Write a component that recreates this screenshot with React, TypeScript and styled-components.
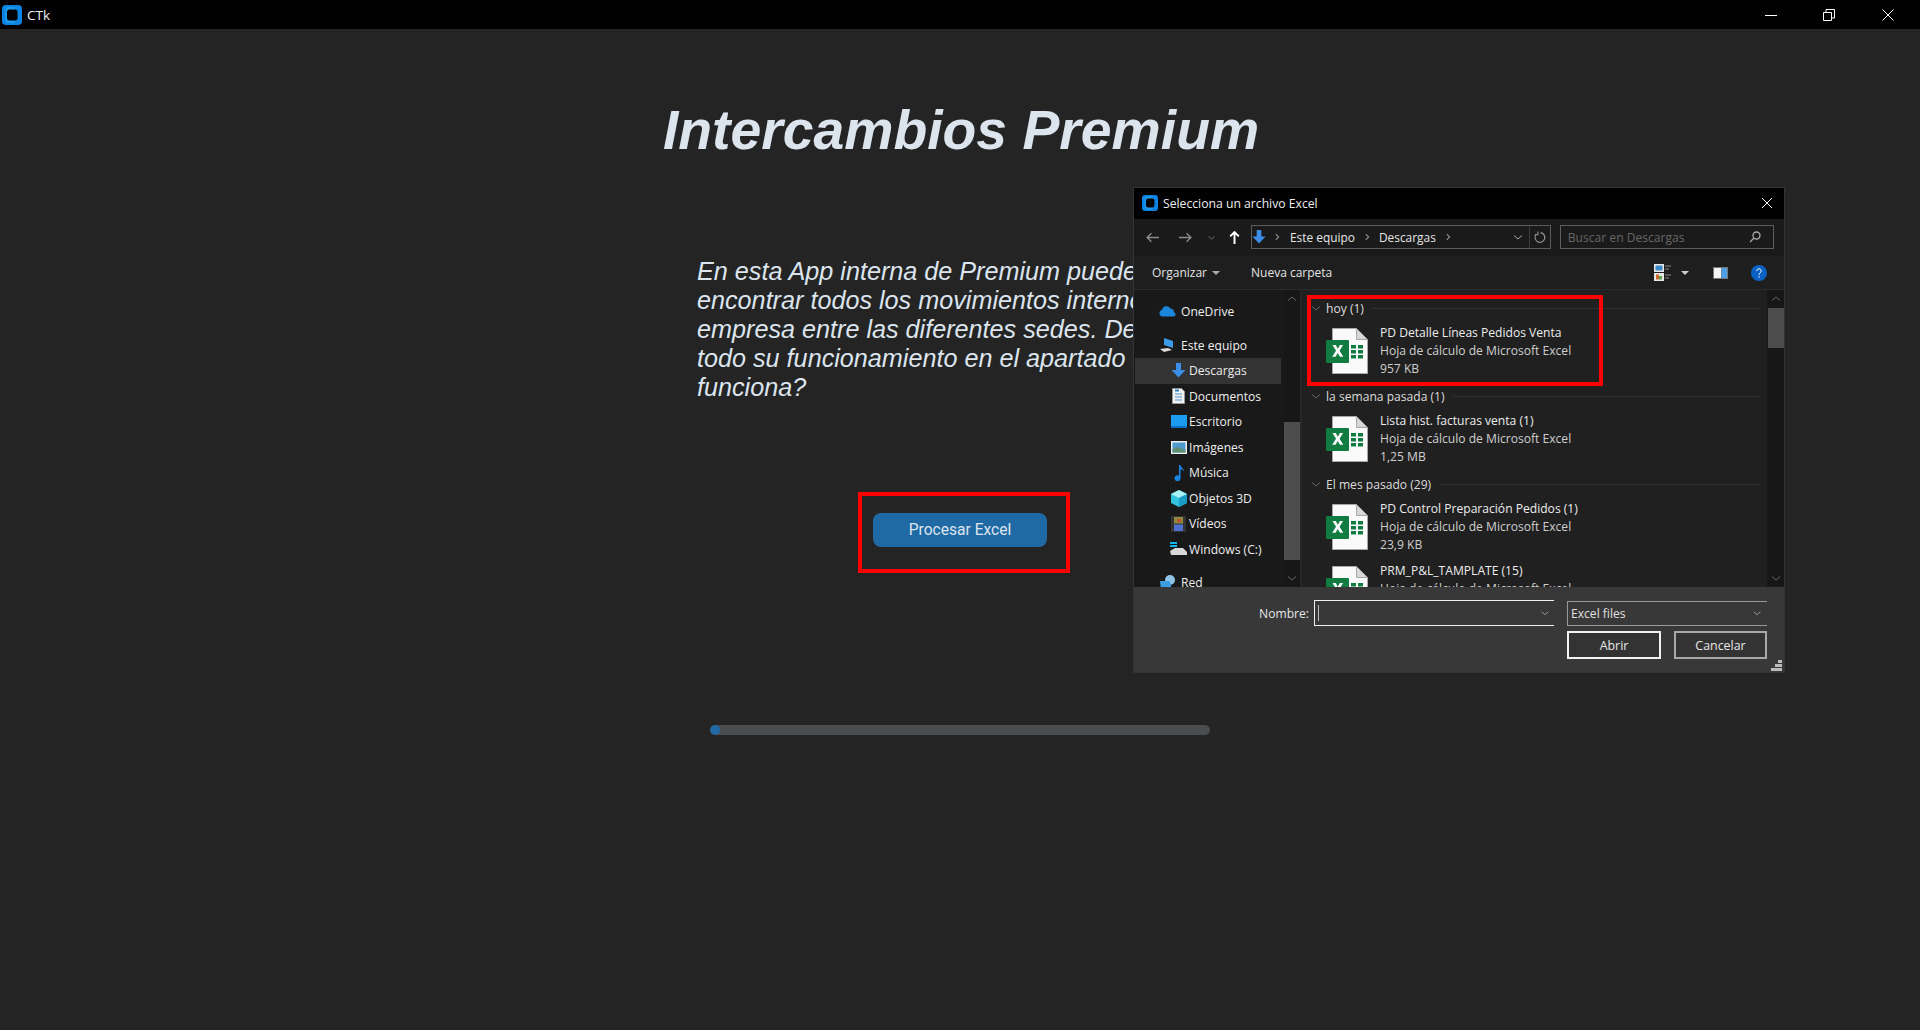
import React from "react";
import styled, { createGlobalStyle } from "styled-components";

const Global = createGlobalStyle`
  html, body { margin: 0; padding: 0; background: #242424; }
  body { font-family: "Liberation Sans", Arial, sans-serif; overflow: hidden; }
  * { box-sizing: border-box; }
`;

const Page = styled.div`
  position: relative;
  width: 1920px;
  height: 1030px;
  background: #242424;
  display: flex;
  flex-direction: column;
  overflow: hidden;
`;

const TitleBar = styled.header`
  height: 29px;
  flex: none;
  background: #000;
  display: flex;
  align-items: center;
  padding-left: 2px;
  color: #f2f2f2;
  font-family: "Open Sans", sans-serif;
  font-size: 13.5px;
`;
const AppName = styled.span`
  margin-left: 5px;
`;
const WindowButtons = styled.div`
  margin-left: auto;
  padding-right: 3px;
  display: flex;
`;
const WindowButton = styled.div`
  width: 58.5px;
  height: 29px;
  display: flex;
  align-items: center;
  justify-content: center;
`;

const Content = styled.main`
  flex: 1;
  display: flex;
  flex-direction: column;
  align-items: center;
`;
const Heading = styled.h1`
  margin: 69px 0 0 2px;
  font-size: 55.3px;
  line-height: 64px;
  font-weight: 700;
  font-style: italic;
  color: #dce4ee;
`;
const Column = styled.div`
  width: 500px;
  display: flex;
  flex-direction: column;
  align-items: center;
`;
const Intro = styled.p`
  align-self: flex-start;
  margin: 95px 0 0 -13px;
  font-size: 25.2px;
  line-height: 29px;
  font-style: italic;
  color: #dce4ee;
  white-space: nowrap;
`;
const RedFrame = styled.div`
  margin-top: 90px;
  margin-left: 8px;
  width: 212px;
  height: 81px;
  border: 4px solid #ff0000;
  display: flex;
  align-items: center;
  padding: 0 0 5px 11px;
`;
const PrimaryButton = styled.button`
  width: 174px;
  height: 34px;
  border: 0;
  border-radius: 8px;
  background: #1f6aa5;
  color: #dce4ee;
  font-family: Roboto, sans-serif;
  font-size: 15.6px;
  padding: 0;
`;
const Progress = styled.div`
  margin-top: 152px;
  width: 500px;
  height: 10px;
  border-radius: 5px;
  background: #4a4d50;
  overflow: hidden;
`;
const ProgressFill = styled.div`
  width: 10px;
  height: 10px;
  border-radius: 5px;
  background: #1f6aa5;
`;

/* Dialog pasted over the page */
const Dialog = styled.section`
  position: absolute;
  left: 1133px;
  top: 187px;
  width: 652px;
  height: 486px;
  border: 1px solid #333;
  display: flex;
  flex-direction: column;
  font-family: "Open Sans", sans-serif;
  font-size: 12.1px;
  color: #eee;
  overflow: hidden;
`;
const DialogTitle = styled.div`
  height: 31px;
  padding: 0 11px 1px 8px;
  flex: none;
  background: #000;
  display: flex;
  align-items: center;
  gap: 5px;
  font-size: 12.2px;
`;
const CloseSlot = styled.div`
  margin-left: auto;
  display: flex;
`;
const NavBar = styled.div`
  height: 37px;
  flex: none;
  background: #1a1a1a;
  display: flex;
  align-items: center;
  padding: 0 10px 1px 0;
`;
const NavIcon = styled.div<{ $w: number }>`
  width: ${(p) => p.$w}px;
  height: 24px;
  flex: none;
  display: flex;
  align-items: center;
  justify-content: center;
`;
const AddressBox = styled.div`
  margin-left: 5px;
  width: 301px;
  height: 24px;
  border: 1px solid #5c5c5c;
  display: flex;
  align-items: center;
  font-size: 11.9px;
`;
const Crumb = styled.span`
  color: #e6e6e6;
  padding: 0 2px;
`;
const Sep = styled.span<{ $w?: number }>`
  width: ${(p) => p.$w ?? 20}px;
  flex: none;
  display: flex;
  justify-content: center;
`;
const AddressEnd = styled.div`
  margin-left: auto;
  display: flex;
  align-items: center;
  height: 22px;
`;
const Refresh = styled.div`
  width: 21px;
  height: 22px;
  border-left: 1px solid #3c3c3c;
  display: flex;
  align-items: center;
  justify-content: center;
`;
const SearchBox = styled.div`
  margin-left: 9px;
  width: 215px;
  height: 24px;
  border: 1px solid #5c5c5c;
  display: flex;
  align-items: center;
  justify-content: space-between;
  padding: 0 12px 0 7px;
  color: #676767;
`;
const Toolbar = styled.div`
  height: 34px;
  flex: none;
  background: #1e1e1e;
  border-bottom: 1px solid #2b2b2b;
  display: flex;
  align-items: center;
  padding: 0 17px 0 18px;
  font-size: 12px;
  color: #e4e4e4;
`;
const ToolLabel = styled.span<{ $left?: number }>`
  margin-left: ${(p) => p.$left ?? 0}px;
`;
const ToolRight = styled.div`
  margin-left: auto;
  display: flex;
  align-items: center;
`;
const Body = styled.div`
  flex: 1;
  display: flex;
  min-height: 0;
  background: #1b1b1b;
`;
const Sidebar = styled.nav`
  width: 149px;
  flex: none;
  background: #191919;
  padding: 8.5px 0 0 1px;
  overflow: hidden;
`;
const NavRow = styled.div<{ $indent: number; $active?: boolean; $gap?: number }>`
  height: 25.5px;
  margin-top: ${(p) => p.$gap ?? 0}px;
  width: 146px;
  display: flex;
  align-items: center;
  gap: ${(p) => (p.$indent < 30 ? 5 : 2)}px;
  padding-left: ${(p) => p.$indent}px;
  background: ${(p) => (p.$active ? "#333" : "transparent")};
  white-space: nowrap;
`;
const RowIcon = styled.span`
  width: 17px;
  height: 17px;
  flex: none;
  display: flex;
  align-items: center;
  justify-content: center;
`;
const ScrollTrack = styled.div`
  width: 17px;
  flex: none;
  background: #171717;
  display: flex;
  flex-direction: column;
  align-items: center;
`;
const ScrollArrow = styled.span<{ $up?: boolean }>`
  height: 18px;
  display: flex;
  align-items: center;
  flex: none;
  transform: ${(p) => (p.$up ? "scaleY(-1)" : "none")};
`;
const ScrollThumb = styled.span<{ $top: number; $height: number }>`
  width: 16px;
  height: ${(p) => p.$height}px;
  margin-top: ${(p) => p.$top}px;
  background: #4d4d4d;
  flex: none;
`;
const Spacer = styled.span`
  flex: 1;
`;
const PaneDivider = styled.div`
  width: 2px;
  flex: none;
  background: #262626;
`;
const FileList = styled.div`
  flex: 1;
  background: #202020;
  padding-top: 8px;
  overflow: hidden;
  min-width: 0;
`;
const GroupHeader = styled.div`
  height: 20px;
  margin-bottom: 2px;
  display: flex;
  align-items: center;
  padding: 0 7px 0 8px;
  color: #dcdcdc;
`;
const GroupName = styled.span`
  margin-left: 4px;
`;
const GroupLine = styled.span`
  flex: 1;
  height: 1px;
  margin-left: 8px;
  background: #303030;
`;
const Group = styled.div`
  margin-bottom: 4px;
`;
const FileRow = styled.div`
  height: 62px;
  display: flex;
  align-items: center;
  padding-left: 24px;
`;
const FileText = styled.div`
  margin-left: 12px;
  display: flex;
  flex-direction: column;
`;
const FileLine = styled.span<{ $strong?: boolean }>`
  height: 18px;
  line-height: 18px;
  white-space: nowrap;
  color: ${(p) => (p.$strong ? "#ededed" : "#cfcfcf")};
`;
const Footer = styled.div`
  height: 85px;
  flex: none;
  background: #383838;
  padding: 13px 17px 0 0;
  display: flex;
  flex-direction: column;
  gap: 5px;
  position: relative;
`;
const FooterRow = styled.div`
  display: flex;
  justify-content: flex-end;
  align-items: center;
`;
const FieldLabel = styled.span`
  margin-right: 5px;
  color: #e6e6e6;
`;
const NameField = styled.div`
  width: 240px;
  height: 26px;
  margin-right: 13px;
  border: 1px solid #f0f0f0;
  border-right: 0;
  display: flex;
  align-items: center;
  justify-content: space-between;
  padding: 0 4px 0 3px;
`;
const Caret = styled.span`
  width: 1px;
  height: 16px;
  background: #bbb;
`;
const TypeField = styled.div`
  width: 200px;
  height: 25px;
  border: 1px solid #999;
  border-right: 0;
  display: flex;
  align-items: center;
  justify-content: space-between;
  padding: 0 5px 0 3px;
  color: #e0e0e0;
`;
const DialogButton = styled.button<{ $main?: boolean }>`
  width: ${(p) => (p.$main ? 94 : 93)}px;
  height: 28px;
  margin-left: ${(p) => (p.$main ? 0 : 13)}px;
  padding: 0;
  background: #333;
  border: 2px solid ${(p) => (p.$main ? "#f2f2f2" : "#a8a8a8")};
  color: #e8e8e8;
  font-family: "Open Sans", sans-serif;
  font-size: 12.4px;
`;
const Grip = styled.div`
  position: absolute;
  right: 2px;
  bottom: 1px;
  display: flex;
`;
const Annotation = styled.div`
  position: absolute;
  left: 1307px;
  top: 295px;
  width: 296px;
  height: 91px;
  border: 4px solid #ff0000;
`;

const AppLogo = ({ size }: { size: number }) => (
  <svg width={size} height={size} viewBox="0 0 20 20">
    <rect x="0" y="0" width="20" height="20" rx="4" fill="#0b84e3" />
    <path d="M13 2H6.500A3 3 0 0 0 3.500 5v10a3 3 0 0 0 3 3H13z" fill="#1d9bf0" />
    <rect x="5" y="4.500" width="10.500" height="11" rx="2.500" fill="#000" />
  </svg>
);

const Line = ({ d, c = "#fff", w = 1, s = 12 }: { d: string; c?: string; w?: number; s?: number }) => (
  <svg width={s} height={s} viewBox="0 0 12 12" fill="none" stroke={c} strokeWidth={w}>
    <path d={d} />
  </svg>
);

const ArrowDown = ({ s = 15 }: { s?: number }) => (
  <svg width={s} height={s} viewBox="0 0 15 15">
    <path d="M5 0h5v7h4.500L7.500 14.500.5 7H5z" fill="#3a8ee6" />
  </svg>
);

const Chevron = ({ c = "#777", s = 12 }: { c?: string; s?: number }) => (
  <Line d="M2 4.500 6 8l4-3.500" c={c} s={s} />
);

const CrumbArrow = () => <Line d="M4.500 2.500 8 6l-3.500 3.500" c="#8a8a8a" w={1.400} s={10} />;

const ExcelIcon = () => (
  <svg width="42" height="46" viewBox="0 0 42 46">
    <path d="M6.500.5h24l11 11v34h-35z" fill="#fafafa" stroke="#a8a8a8" />
    <path d="M30.500.5v11h11z" fill="#d8d8d8" stroke="#a8a8a8" />
    <rect x="0" y="12" width="23" height="23" rx="1" fill="#107c41" />
    <path d="M6.500 17h3.300l2 3.700 2.100-3.700h3.200l-3.500 5.800 3.700 6h-3.300l-2.200-3.900-2.300 3.900H6.200l3.800-6z" fill="#fff" />
    <path d="M25 17h5v3.500h-5zM32 17h5v3.500h-5zM25 22h5v3.500h-5zM32 22h5v3.500h-5zM25 27h5v3.500h-5zM32 27h5v3.500h-5z" fill="#107c41" />
  </svg>
);

const icons: Record<string, React.ReactNode> = {
  cloud: (
    <svg width="17" height="12" viewBox="0 0 17 12">
      <path d="M3.500 11.500A3.300 3.300 0 0 1 3 5a4.500 4.500 0 0 1 8.300-1.500A3.900 3.900 0 0 1 15 7.300a2.200 2.200 0 0 1 0 4.200z" fill="#1a86dc" />
    </svg>
  ),
  pc: (
    <svg width="17" height="16" viewBox="0 0 17 16">
      <path d="M5 1l9 3v7L5 8z" fill="#3a9be8" />
      <path d="M1 12l8-1 4 2-8 2z" fill="#d9d9d9" />
    </svg>
  ),
  down: <ArrowDown />,
  doc: (
    <svg width="13" height="16" viewBox="0 0 13 16">
      <path d="M.5.500h9l3 3v12H.5z" fill="#f2f2f2" stroke="#999" />
      <path d="M3 6h7M3 9h7M3 12h7" stroke="#4a8fd0" />
      <path d="M3 2.500h4" stroke="#2d7fd0" strokeWidth="2" />
    </svg>
  ),
  desk: (
    <svg width="16" height="13" viewBox="0 0 16 13">
      <rect width="16" height="11" fill="#1c9cf0" />
      <rect y="11" width="16" height="2" fill="#0c6fc0" />
    </svg>
  ),
  pic: (
    <svg width="16" height="13" viewBox="0 0 16 13">
      <rect width="16" height="13" fill="#eee" />
      <rect x="1.500" y="1.500" width="13" height="10" fill="#4f9bd0" />
      <path d="M1.500 11.500V8l5-2 8 3v2.500z" fill="#5f8f70" />
    </svg>
  ),
  note: (
    <svg width="12" height="16" viewBox="0 0 12 16">
      <path d="M6 0h1.500c.5 3 3.500 3.500 3.500 6.500-1-1.500-2-2-3.500-2.200V13a3 3 0 1 1-1.500-2.400z" fill="#1786e0" />
    </svg>
  ),
  cube: (
    <svg width="16" height="17" viewBox="0 0 16 17">
      <path d="M8 0l8 4v9l-8 4-8-4V4z" fill="#33c3de" />
      <path d="M0 4l8 4 8-4-8-4z" fill="#a8f0f5" />
      <path d="M8 8v9l8-4V4z" fill="#1a9ac4" />
    </svg>
  ),
  video: (
    <svg width="15" height="16" viewBox="0 0 15 16">
      <rect width="15" height="16" fill="#333" />
      <rect x="3" y="1" width="9" height="6.500" fill="#8d8a40" />
      <rect x="3" y="8.500" width="9" height="6.500" fill="#4f6fd0" />
      <rect x="6" y="3" width="4" height="3" fill="#c05030" />
    </svg>
  ),
  drive: (
    <svg width="17" height="14" viewBox="0 0 17 14">
      <path d="M0 0l7 0v2H0zM0 3h7v2H0z" fill="#12b4ee" />
      <path d="M0 9l5-3h8l4 4v3H1z" fill="#d8d8d8" />
    </svg>
  ),
  net: (
    <svg width="16" height="15" viewBox="0 0 16 15">
      <circle cx="10" cy="5" r="5" fill="#8fc4e6" />
      <path d="M0 6h9l2 3v6H1z" fill="#3d9be0" />
    </svg>
  ),
};

const navItems = [
  { icon: "cloud", label: "OneDrive", indent: 24 },
  { icon: "pc", label: "Este equipo", indent: 24, gap: 8.500 },
  { icon: "down", label: "Descargas", indent: 35, active: true },
  { icon: "doc", label: "Documentos", indent: 35 },
  { icon: "desk", label: "Escritorio", indent: 35 },
  { icon: "pic", label: "Imágenes", indent: 35 },
  { icon: "note", label: "Música", indent: 35 },
  { icon: "cube", label: "Objetos 3D", indent: 35 },
  { icon: "video", label: "Vídeos", indent: 35 },
  { icon: "drive", label: "Windows (C:)", indent: 35 },
  { icon: "net", label: "Red", indent: 24, gap: 8 },
];

const groups = [
  { name: "hoy (1)", files: [{ name: "PD Detalle Líneas Pedidos Venta", size: "957 KB" }] },
  { name: "la semana pasada (1)", files: [{ name: "Lista hist. facturas venta (1)", size: "1,25 MB" }] },
  {
    name: "El mes pasado (29)",
    files: [
      { name: "PD Control Preparación Pedidos (1)", size: "23,9 KB" },
      { name: "PRM_P&L_TAMPLATE (15)", size: "24,1 KB" },
    ],
  },
];

export default function App() {
  return (
    <Page>
      <Global />
      <TitleBar>
        <AppLogo size={20} />
        <AppName>CTk</AppName>
        <WindowButtons>
          <WindowButton>
            <Line d="M0 6.500h12" />
          </WindowButton>
          <WindowButton>
            <Line d="M.5 3.500h8v8h-8zM3 3V.5h8.500V9H9" />
          </WindowButton>
          <WindowButton>
            <Line d="M.5.5l11 11M11.500.5l-11 11" />
          </WindowButton>
        </WindowButtons>
      </TitleBar>

      <Content>
        <Heading>Intercambios Premium</Heading>
        <Column>
          <Intro>
            En esta App interna de Premium puedes
            <br />
            encontrar todos los movimientos internos de la
            <br />
            empresa entre las diferentes sedes. Descubre
            <br />
            todo su funcionamiento en el apartado ¿Cómo
            <br />
            funciona?
          </Intro>
          <RedFrame>
            <PrimaryButton>Procesar Excel</PrimaryButton>
          </RedFrame>
          <Progress>
            <ProgressFill />
          </Progress>
        </Column>
      </Content>

      <Dialog>
        <DialogTitle>
          <AppLogo size={16} />
          <span>Selecciona un archivo Excel</span>
          <CloseSlot>
            <Line d="M1 1l10 10M11 1 1 11" />
          </CloseSlot>
        </DialogTitle>
        <NavBar>
          <NavIcon $w={36}>
            <Line d="M12 6H1M5 2 1 6l4 4" c="#8a8a8a" w={1.300} s={13} />
          </NavIcon>
          <NavIcon $w={30}>
            <Line d="M0 6h11M7 2l4 4-4 4" c="#8a8a8a" w={1.300} s={13} />
          </NavIcon>
          <NavIcon $w={22}>
            <Chevron c="#8a8a8a" s={9} />
          </NavIcon>
          <NavIcon $w={24}>
            <Line d="M6 12V1M2 5l4-4 4 4" w={1.800} s={13} />
          </NavIcon>
          <AddressBox>
            <ArrowDown s={14} />
            <Sep $w={22}>
              <CrumbArrow />
            </Sep>
            <Crumb>Este equipo</Crumb>
            <Sep>
              <CrumbArrow />
            </Sep>
            <Crumb>Descargas</Crumb>
            <Sep>
              <CrumbArrow />
            </Sep>
            <AddressEnd>
              <NavIcon $w={22}>
                <Chevron c="#aaa" />
              </NavIcon>
              <Refresh>
                <Line d="M7 1.500a4.500 4.500 0 1 1-4 1.500M4.500 .5v3h-3" c="#999" s={13} />
              </Refresh>
            </AddressEnd>
          </AddressBox>
          <SearchBox>
            <span>Buscar en Descargas</span>
            <Line d="M7.500 1a3.500 3.500 0 1 1 0 7 3.500 3.500 0 0 1 0-7zM5 7l-4 4" c="#aaa" w={1.300} />
          </SearchBox>
        </NavBar>
        <Toolbar>
          <ToolLabel>Organizar</ToolLabel>
          <svg width="8" height="4" viewBox="0 0 8 4" style={{ marginLeft: 5 }}>
            <path d="M0 0h8L4 4z" fill="#aaa" />
          </svg>
          <ToolLabel $left={31}>Nueva carpeta</ToolLabel>
          <ToolRight>
            <svg width="18" height="17" viewBox="0 0 18 17">
              <rect x="0" y="0" width="10" height="8" fill="#e8e8e8" />
              <rect x="1.500" y="1.500" width="7" height="5" fill="#3d88c8" />
              <rect x="0" y="9" width="10" height="8" fill="#e8e8e8" />
              <rect x="2" y="10.500" width="3" height="5" fill="#c96a2c" />
              <rect x="5" y="12" width="3" height="3.500" fill="#59a14f" />
              <path d="M11 2h6M11 5h4M11 11h6M11 14h4" stroke="#888" />
            </svg>
            <svg width="8" height="4" viewBox="0 0 8 4" style={{ marginLeft: 9 }}>
              <path d="M0 0h8L4 4z" fill="#ccc" />
            </svg>
            <svg width="15" height="12" viewBox="0 0 15 12" style={{ marginLeft: 24 }}>
              <rect width="15" height="12" fill="#777" />
              <rect x="1" y="1" width="7" height="10" fill="#f4f4f4" />
              <rect x="8.500" y="1" width="5.500" height="10" fill="#4da0e6" />
            </svg>
            <svg width="16" height="16" viewBox="0 0 16 16" style={{ marginLeft: 23 }}>
              <circle cx="8" cy="8" r="8" fill="#0a62c4" />
              <path d="M5.800 6a2.200 2.200 0 1 1 3.400 1.800c-.8.500-1.200 1-1.200 2M8 11v1.500" stroke="#fff" fill="none" />
            </svg>
          </ToolRight>
        </Toolbar>
        <Body>
          <Sidebar>
            {navItems.map((n) => (
              <NavRow key={n.label} $indent={n.indent} $active={n.active} $gap={n.gap}>
                <RowIcon>{icons[n.icon]}</RowIcon>
                {n.label}
              </NavRow>
            ))}
          </Sidebar>
          <ScrollTrack>
            <ScrollArrow $up>
              <Chevron c="#666" />
            </ScrollArrow>
            <ScrollThumb $top={114} $height={138} />
            <Spacer />
            <ScrollArrow>
              <Chevron c="#666" />
            </ScrollArrow>
          </ScrollTrack>
          <PaneDivider />
          <FileList>
            {groups.map((g) => (
              <Group key={g.name}>
                <GroupHeader>
                  <Chevron c="#666" />
                  <GroupName>{g.name}</GroupName>
                  <GroupLine />
                </GroupHeader>
                {g.files.map((f) => (
                  <FileRow key={f.name}>
                    <ExcelIcon />
                    <FileText>
                      <FileLine $strong>{f.name}</FileLine>
                      <FileLine>Hoja de cálculo de Microsoft Excel</FileLine>
                      <FileLine>{f.size}</FileLine>
                    </FileText>
                  </FileRow>
                ))}
              </Group>
            ))}
          </FileList>
          <ScrollTrack>
            <ScrollArrow $up>
              <Chevron c="#666" />
            </ScrollArrow>
            <ScrollThumb $top={0} $height={40} />
            <Spacer />
            <ScrollArrow>
              <Chevron c="#666" />
            </ScrollArrow>
          </ScrollTrack>
        </Body>
        <Footer>
          <FooterRow>
            <FieldLabel>Nombre:</FieldLabel>
            <NameField>
              <Caret />
              <Chevron c="#aaa" s={10} />
            </NameField>
            <TypeField>
              <span>Excel files</span>
              <Chevron c="#aaa" s={10} />
            </TypeField>
          </FooterRow>
          <FooterRow>
            <DialogButton $main>Abrir</DialogButton>
            <DialogButton>Cancelar</DialogButton>
          </FooterRow>
          <Grip>
            <svg width="11" height="11" viewBox="0 0 11 11">
              <path d="M7 0h4v3H7zM4 4h7v3H4zM0 8h11v3H0z" fill="#bbb" />
            </svg>
          </Grip>
        </Footer>
      </Dialog>
      <Annotation />
    </Page>
  );
}
